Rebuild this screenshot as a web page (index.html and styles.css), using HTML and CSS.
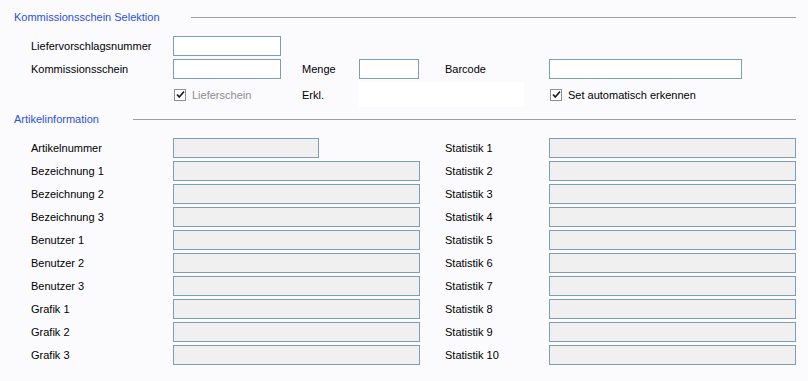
FILE: index.html
```html
<!DOCTYPE html>
<html lang="de">
<head>
  <meta charset="UTF-8" />
  <title>Kommissionsschein Selektion</title>
  <link rel="stylesheet" href="styles.css">
</head>
<body>
  <div class="section-head">
    <span class="section-title first">Kommissionsschein Selektion</span>
    <span class="section-line"></span>
  </div>

  <div class="selection">
    <label class="c1">Liefervorschlagsnummer</label>
    <input class="field c2" type="text" />

    <label class="c1">Kommissionsschein</label>
    <input class="field c2" type="text" />
    <label class="c4">Menge</label>
    <input class="field c5" type="text" />
    <label class="c7">Barcode</label>
    <input class="field c8" type="text" />

    <div class="check c2 disabled">
      <span class="box"><svg width="9" height="9" viewBox="0 0 9 9"><path d="M1 4.5 L3.3 7 L8 1.5" fill="none" stroke="#202020" stroke-width="1.8"/></svg></span>
      <span>Lieferschein</span>
    </div>
    <label class="c4">Erkl.</label>
    <div class="note"></div>
    <div class="check c8">
      <span class="box"><svg width="9" height="9" viewBox="0 0 9 9"><path d="M1 4.5 L3.3 7 L8 1.5" fill="none" stroke="#202020" stroke-width="1.8"/></svg></span>
      <span>Set automatisch erkennen</span>
    </div>
  </div>

  <div class="section-head">
    <span class="section-title second">Artikelinformation</span>
    <span class="section-line"></span>
  </div>

  <div class="article">
    <label>Artikelnummer</label><input class="field ro short" type="text" readonly />
    <label class="right">Statistik 1</label><input class="field ro" type="text" readonly />

    <label>Bezeichnung 1</label><input class="field ro" type="text" readonly />
    <label class="right">Statistik 2</label><input class="field ro" type="text" readonly />

    <label>Bezeichnung 2</label><input class="field ro" type="text" readonly />
    <label class="right">Statistik 3</label><input class="field ro" type="text" readonly />

    <label>Bezeichnung 3</label><input class="field ro" type="text" readonly />
    <label class="right">Statistik 4</label><input class="field ro" type="text" readonly />

    <label>Benutzer 1</label><input class="field ro" type="text" readonly />
    <label class="right">Statistik 5</label><input class="field ro" type="text" readonly />

    <label>Benutzer 2</label><input class="field ro" type="text" readonly />
    <label class="right">Statistik 6</label><input class="field ro" type="text" readonly />

    <label>Benutzer 3</label><input class="field ro" type="text" readonly />
    <label class="right">Statistik 7</label><input class="field ro" type="text" readonly />

    <label>Grafik 1</label><input class="field ro" type="text" readonly />
    <label class="right">Statistik 8</label><input class="field ro" type="text" readonly />

    <label>Grafik 2</label><input class="field ro" type="text" readonly />
    <label class="right">Statistik 9</label><input class="field ro" type="text" readonly />

    <label>Grafik 3</label><input class="field ro" type="text" readonly />
    <label class="right">Statistik 10</label><input class="field ro" type="text" readonly />
  </div>
</body>
</html>
```

FILE: styles.css
```css
body {
  margin: 0;
  background: #fbfbfe;
  font-family: "Liberation Sans", Arial, sans-serif;
  font-size: 11px;
  color: #000;
}
.section-head {
  display: flex;
  align-items: center;
  height: 14px;
  padding-left: 14px;
  padding-right: 12px;
}
.section-head:first-child {
  margin-top: 10px;
}
.section-title {
  color: #2b4fdf;
  white-space: nowrap;
}
.section-title.first {
  width: 177px;
}
.section-title.second {
  width: 119px;
}
.section-line {
  flex: 1;
  height: 1px;
  background: #a49d9d;
}
.selection {
  display: grid;
  grid-template-columns: 142px 108px 21px 57px 60px 26px 104px 193px;
  grid-template-rows: 20px 20px 25px;
  row-gap: 3px;
  padding-left: 31px;
  margin-top: 12px;
  margin-bottom: 5px;
  align-items: center;
}
.selection label, .article label {
  grid-column: 1;
}
.selection .c2 { grid-column: 2; }
.selection .c4 { grid-column: 4; }
.selection .c5 { grid-column: 5; }
.selection .c7 { grid-column: 7; }
.selection .c8 { grid-column: 8; }
.field {
  box-sizing: border-box;
  height: 20px;
  width: 100%;
  margin: 0;
  border: 1px solid #7f9db9;
  background: #fff;
  font: inherit;
}
.field.ro {
  background: #f0f0f0;
}
.field.short {
  width: 146px;
}
.note {
  grid-column: 5 / 8;
  width: 165px;
  height: 25px;
  background: #fff;
}
.check {
  display: flex;
  align-items: center;
  gap: 6px;
  padding-left: 1px;
}
.check .box {
  box-sizing: border-box;
  width: 12px;
  height: 12px;
  border: 1px solid #8e8f8f;
  background: #fff;
  display: flex;
  align-items: center;
  justify-content: center;
}
.check.disabled {
  color: #8d8d8d;
}
.article {
  display: grid;
  grid-template-columns: 142px 247px 25px 104px 247px;
  grid-auto-rows: 20px;
  row-gap: 3px;
  padding-left: 31px;
  margin-top: 12px;
  align-items: center;
}
.article .right {
  grid-column: 4;
}
```
